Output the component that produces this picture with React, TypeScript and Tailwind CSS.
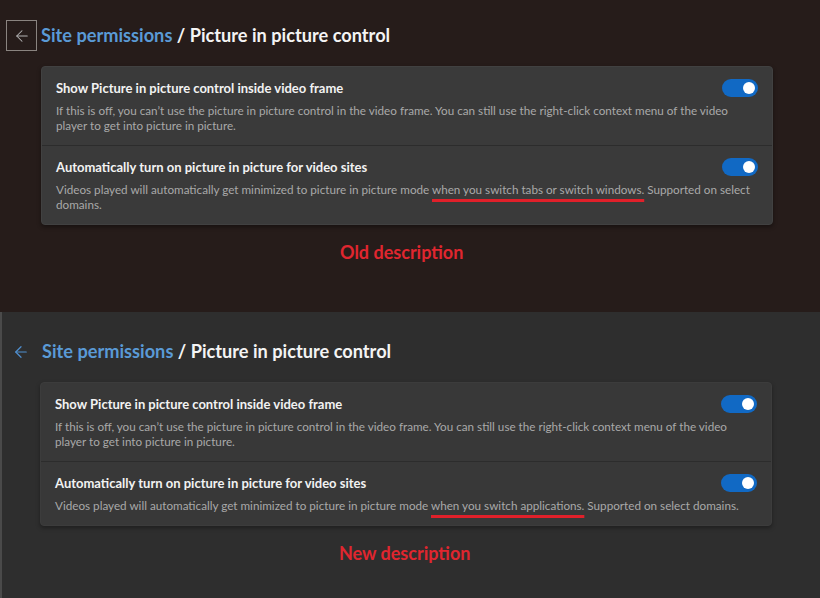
import React from "react";
import { ArrowLeft } from "lucide-react";

type RowProps = {
  title: string;
  children: React.ReactNode;
  last?: boolean;
};

const Toggle = () => (
  <div className="flex h-[18px] w-[36px] shrink-0 items-center justify-end rounded-full bg-[#1169c4] pr-[3px]">
    <div className="h-[12px] w-[12px] rounded-full bg-white" />
  </div>
);

const Row = ({ title, children, last }: RowProps) => (
  <div
    className={
      "flex flex-col px-[14px] pt-[12px] pb-[12px] " + (last ? "" : "border-b border-[#2c2c2c]")
    }
  >
    <div className="flex items-center justify-between">
      <div className="text-[13px] font-bold leading-[18px] text-[#f2f2f2]">{title}</div>
      <Toggle />
    </div>
    <div className="mt-[6px] whitespace-nowrap text-[11.7px] leading-[15px] text-[#a9a9a9]">{children}</div>
  </div>
);

const Mark = ({ children }: { children: React.ReactNode }) => (
  <span className="underline decoration-[#e0202a] decoration-[3px] underline-offset-[5px]">
    {children}
  </span>
);

const Header = ({ boxed }: { boxed?: boolean }) => (
  <div className="flex h-[31px] items-center">
    {boxed ? (
      <div className="ml-[6px] flex h-[31px] w-[31px] items-center justify-center border border-[#8a8480]">
        <ArrowLeft size={18} strokeWidth={1.4} className="text-[#b4b4b4]" />
      </div>
    ) : (
      <div className="ml-[10px] flex w-[26px] items-center">
        <ArrowLeft size={18} strokeWidth={1.6} className="text-[#4f8fd0]" />
      </div>
    )}
    <h1 className="ml-[4px] text-[18.2px] font-bold text-[#f4f4f4]">
      <span className="text-[#5a9ad6]">Site permissions</span> / Picture in picture control
    </h1>
  </div>
);

const App = () => {
  return (
    <div className="flex h-[598px] w-[820px] flex-col font-['Lato','Open_Sans',sans-serif]">
      <section className="flex h-[312px] flex-col bg-[#261c1a] pt-[20px]">
        <Header boxed />
        <div className="ml-[41px] mt-[15px] w-[732px] rounded-[4px] border border-[#414141] bg-[#3a3a3a] shadow-[0_2px_4px_rgba(0,0,0,0.4)]">
          <Row title="Show Picture in picture control inside video frame">
            If this is off, you can’t use the picture in picture control in the video frame. You can still use the right-click context menu of the video
            <br />
            player to get into picture in picture.
          </Row>
          <Row title="Automatically turn on picture in picture for video sites" last>
            Videos played will automatically get minimized to picture in picture mode{" "}
            <Mark>when you switch tabs or switch windows.</Mark> Supported on select
            <br />
            domains.
          </Row>
        </div>
        <div className="ml-[340px] mt-[14px] text-[18px] font-bold text-[#e0262f]">Old description</div>
      </section>
      <section className="flex flex-1 flex-col border-l-2 border-[#4a4a4a] bg-[#2e2e2e] pt-[24px]">
        <Header />
        <div className="ml-[38px] mt-[15px] w-[732px] rounded-[4px] border border-[#3c3c3c] bg-[#383838] shadow-[0_2px_4px_rgba(0,0,0,0.35)]">
          <Row title="Show Picture in picture control inside video frame">
            If this is off, you can’t use the picture in picture control in the video frame. You can still use the right-click context menu of the video
            <br />
            player to get into picture in picture.
          </Row>
          <Row title="Automatically turn on picture in picture for video sites" last>
            Videos played will automatically get minimized to picture in picture mode{" "}
            <Mark>when you switch applications.</Mark> Supported on select domains.
          </Row>
        </div>
        <div className="ml-[337px] mt-[14px] text-[18px] font-bold text-[#e0262f]">New description</div>
      </section>
    </div>
  );
};

export default App;
